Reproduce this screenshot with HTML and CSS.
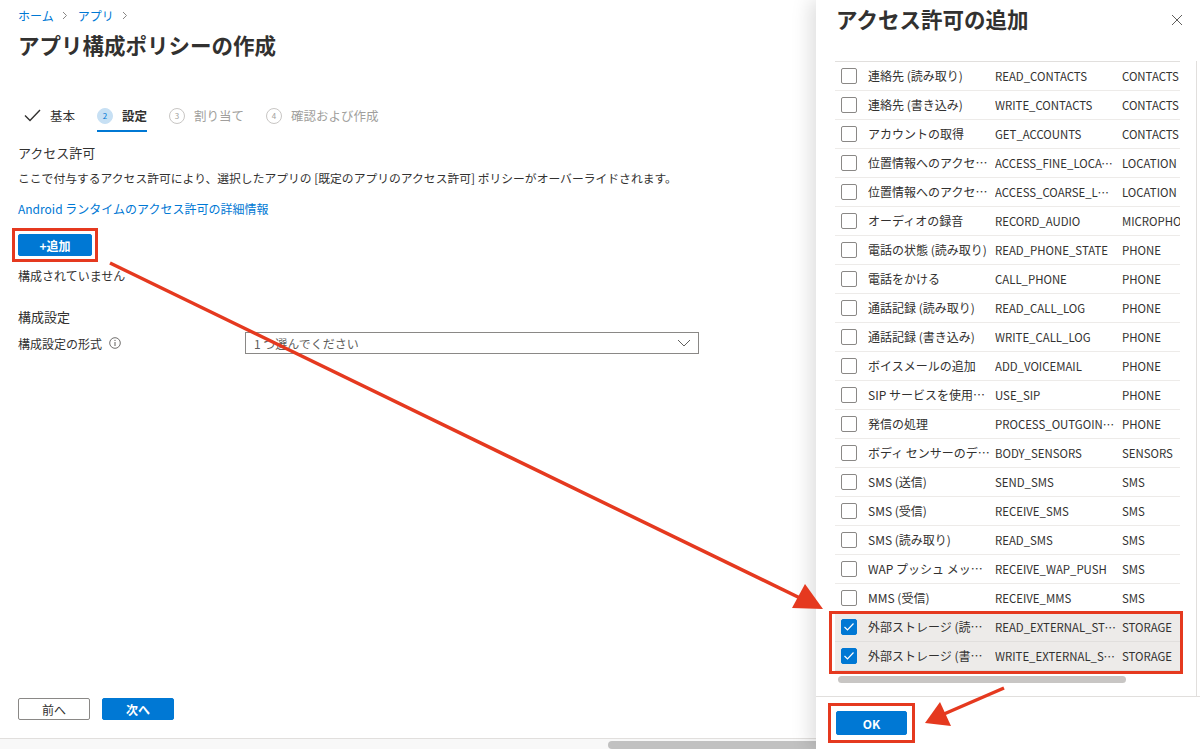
FILE: index.html
```html
<!DOCTYPE html>
<html lang="ja">
<head>
    <meta charset="UTF-8">
    <meta name="viewport" content="width=device-width, initial-scale=1.0">
    <title>アプリ構成ポリシーの作成</title>
    <link rel="stylesheet" href="styles.css">
</head>
<body>
<div class="screen">
    <div class="main">
        <div class="content">
            <nav class="crumbs">
                <a href="#">ホーム</a>
                <svg class="crumb-sep" width="6" height="9" viewBox="0 0 6 9"><path d="M1 1l3.5 3.5L1 8" fill="none" stroke="#8a8886" stroke-width="1"/></svg>
                <a href="#">アプリ</a>
                <svg class="crumb-sep" width="6" height="9" viewBox="0 0 6 9"><path d="M1 1l3.5 3.5L1 8" fill="none" stroke="#8a8886" stroke-width="1"/></svg>
            </nav>
            <h1 class="title">アプリ構成ポリシーの作成</h1>

            <div class="steps">
                <div class="step done">
                    <svg width="17" height="13" viewBox="0 0 17 13"><path d="M1 6.5l5 5L16 1" fill="none" stroke="#323130" stroke-width="1.4"/></svg>
                    <span>基本</span>
                </div>
                <div class="step active">
                    <span class="num">2</span>
                    <span>設定</span>
                </div>
                <div class="step">
                    <span class="num">3</span>
                    <span>割り当て</span>
                </div>
                <div class="step">
                    <span class="num">4</span>
                    <span>確認および作成</span>
                </div>
            </div>

            <h3 class="section-title">アクセス許可</h3>
            <p class="desc">ここで付与するアクセス許可により、選択したアプリの [既定のアプリのアクセス許可] ポリシーがオーバーライドされます。</p>
            <a class="link" href="#">Android ランタイムのアクセス許可の詳細情報</a>
            <div class="mark add-mark"><button class="btn-primary add-btn">+追加</button></div>
            <p class="empty">構成されていません</p>

            <h3 class="section-title config-title">構成設定</h3>
            <div class="field">
                <label>構成設定の形式
                    <svg class="info" width="12" height="12" viewBox="0 0 12 12"><circle cx="6" cy="6" r="5.3" fill="none" stroke="#605e5c" stroke-width="0.9"/><path d="M6 5v4" stroke="#605e5c" stroke-width="1"/><circle cx="6" cy="3.4" r="0.6" fill="#605e5c"/></svg>
                </label>
                <div class="select">
                    <span>1 つ選んでください</span>
                    <svg width="14" height="8" viewBox="0 0 14 8"><path d="M1 1l6 6 6-6" fill="none" stroke="#605e5c" stroke-width="1"/></svg>
                </div>
            </div>
        </div>

        <div class="footer">
            <button class="btn-default">前へ</button>
            <button class="btn-primary">次へ</button>
        </div>
        <div class="hscroll"><div class="hscroll-thumb"></div></div>
    </div>

    <aside class="panel">
        <div class="panel-head">
            <h2>アクセス許可の追加</h2>
            <svg class="close" width="12" height="12" viewBox="0 0 12 12"><path d="M1 1l10 10M11 1L1 11" stroke="#605e5c" stroke-width="1"/></svg>
        </div>
        <div class="panel-body">
            <div class="perm-list">
                <div class="perm-row"><span class="cb"></span><span class="c1">連絡先 (読み取り)</span><span class="c2">READ_CONTACTS</span><span class="c3">CONTACTS</span></div>
                <div class="perm-row"><span class="cb"></span><span class="c1">連絡先 (書き込み)</span><span class="c2">WRITE_CONTACTS</span><span class="c3">CONTACTS</span></div>
                <div class="perm-row"><span class="cb"></span><span class="c1">アカウントの取得</span><span class="c2">GET_ACCOUNTS</span><span class="c3">CONTACTS</span></div>
                <div class="perm-row"><span class="cb"></span><span class="c1">位置情報へのアクセス (詳細)</span><span class="c2">ACCESS_FINE_LOCATION</span><span class="c3">LOCATION</span></div>
                <div class="perm-row"><span class="cb"></span><span class="c1">位置情報へのアクセス (おおよそ)</span><span class="c2">ACCESS_COARSE_LOCATION</span><span class="c3">LOCATION</span></div>
                <div class="perm-row"><span class="cb"></span><span class="c1">オーディオの録音</span><span class="c2">RECORD_AUDIO</span><span class="c3">MICROPHONE</span></div>
                <div class="perm-row"><span class="cb"></span><span class="c1">電話の状態 (読み取り)</span><span class="c2">READ_PHONE_STATE</span><span class="c3">PHONE</span></div>
                <div class="perm-row"><span class="cb"></span><span class="c1">電話をかける</span><span class="c2">CALL_PHONE</span><span class="c3">PHONE</span></div>
                <div class="perm-row"><span class="cb"></span><span class="c1">通話記録 (読み取り)</span><span class="c2">READ_CALL_LOG</span><span class="c3">PHONE</span></div>
                <div class="perm-row"><span class="cb"></span><span class="c1">通話記録 (書き込み)</span><span class="c2">WRITE_CALL_LOG</span><span class="c3">PHONE</span></div>
                <div class="perm-row"><span class="cb"></span><span class="c1">ボイスメールの追加</span><span class="c2">ADD_VOICEMAIL</span><span class="c3">PHONE</span></div>
                <div class="perm-row"><span class="cb"></span><span class="c1">SIP サービスを使用する</span><span class="c2">USE_SIP</span><span class="c3">PHONE</span></div>
                <div class="perm-row"><span class="cb"></span><span class="c1">発信の処理</span><span class="c2">PROCESS_OUTGOING_CALLS</span><span class="c3">PHONE</span></div>
                <div class="perm-row"><span class="cb"></span><span class="c1">ボディ センサーのデータ</span><span class="c2">BODY_SENSORS</span><span class="c3">SENSORS</span></div>
                <div class="perm-row"><span class="cb"></span><span class="c1">SMS (送信)</span><span class="c2">SEND_SMS</span><span class="c3">SMS</span></div>
                <div class="perm-row"><span class="cb"></span><span class="c1">SMS (受信)</span><span class="c2">RECEIVE_SMS</span><span class="c3">SMS</span></div>
                <div class="perm-row"><span class="cb"></span><span class="c1">SMS (読み取り)</span><span class="c2">READ_SMS</span><span class="c3">SMS</span></div>
                <div class="perm-row"><span class="cb"></span><span class="c1">WAP プッシュ メッセージの受信</span><span class="c2">RECEIVE_WAP_PUSH</span><span class="c3">SMS</span></div>
                <div class="perm-row"><span class="cb"></span><span class="c1">MMS (受信)</span><span class="c2">RECEIVE_MMS</span><span class="c3">SMS</span></div>
                <div class="selected-group">
                    <div class="perm-row selected"><span class="cb checked"><svg width="12" height="10" viewBox="0 0 12 10"><path d="M1.5 5l3 3 6-6.5" fill="none" stroke="#fff" stroke-width="1.2"/></svg></span><span class="c1">外部ストレージ (読み取り)</span><span class="c2">READ_EXTERNAL_STORAGE</span><span class="c3">STORAGE</span></div>
                    <div class="perm-row selected"><span class="cb checked"><svg width="12" height="10" viewBox="0 0 12 10"><path d="M1.5 5l3 3 6-6.5" fill="none" stroke="#fff" stroke-width="1.2"/></svg></span><span class="c1">外部ストレージ (書き込み)</span><span class="c2">WRITE_EXTERNAL_STORAGE</span><span class="c3">STORAGE</span></div>
                </div>
            </div>
            <div class="list-scroll"><div class="list-thumb"></div></div>
        </div>
        <div class="panel-foot">
            <div class="mark ok-mark"><button class="btn-primary ok-btn">OK</button></div>
        </div>
    </aside>

    <!-- annotation arrows -->
    <svg class="arrows" width="1200" height="749" viewBox="0 0 1200 749">
        <line x1="110" y1="263" x2="800" y2="598" stroke="#e5391f" stroke-width="3.5"/>
        <polygon points="823,609 792,608 805,584" fill="#e5391f"/>
        <line x1="1004" y1="688" x2="944" y2="714" stroke="#e5391f" stroke-width="3.5"/>
        <polygon points="925,723 940,702 951,726" fill="#e5391f"/>
    </svg>
</div>
</body>
</html>
```

FILE: styles.css
```css
* {
    box-sizing: border-box;
}

body {
    margin: 0;
    font-family: "Noto Sans CJK JP", sans-serif;
    color: #323130;
    background-color: #fff;
    overflow: hidden;
}

.screen {
    position: relative;
    display: flex;
    width: 1200px;
    height: 749px;
    overflow: hidden;
}

/* main blade */

.main {
    width: 816px;
    height: 749px;
    display: flex;
    flex-direction: column;
    flex-shrink: 0;
}

.content {
    flex: 1;
    padding: 0 18px;
}

.crumbs {
    display: flex;
    align-items: center;
    gap: 8px;
    margin-top: 7px;
    height: 16px;
    font-size: 12px;
}

.crumbs a {
    color: #0078d4;
    text-decoration: none;
}

.crumb-sep {
    margin-right: 2px;
}

.title {
    margin: 8px 0 0;
    font-size: 21.5px;
    line-height: 28px;
    font-weight: 700;
    color: #323130;
}

.steps {
    display: flex;
    gap: 22px;
    margin-top: 42px;
    padding-left: 6px;
    font-size: 12.5px;
}

.step {
    display: flex;
    align-items: center;
    gap: 9px;
    height: 31px;
    color: #a19f9d;
    border-bottom: 2px solid transparent;
}

.step.done {
    color: #323130;
    gap: 9px;
}

.step.active {
    color: #323130;
    font-weight: 700;
    border-bottom-color: #0078d4;
}

.step .num {
    width: 16px;
    height: 16px;
    border-radius: 50%;
    border: 1px solid #c8c6c4;
    font-size: 8px;
    font-weight: 400;
    display: flex;
    align-items: center;
    justify-content: center;
    color: #a19f9d;
}

.step.active .num {
    background-color: #c7e0f4;
    border-color: #c7e0f4;
    color: #0078d4;
}

.section-title {
    margin: 12px 0 0;
    font-size: 13px;
    font-weight: 400;
    line-height: 18px;
}

.desc {
    margin: 7px 0 0;
    font-size: 11.8px;
    line-height: 18px;
}

.link {
    display: block;
    margin-top: 13px;
    font-size: 12px;
    line-height: 18px;
    color: #0078d4;
    text-decoration: none;
}

.btn-primary,
.btn-default {
    height: 22px;
    width: 72px;
    font-family: inherit;
    font-size: 12px;
    font-weight: 700;
    border-radius: 2px;
    cursor: pointer;
}

.btn-primary {
    background-color: #0078d4;
    border: 1px solid #0078d4;
    color: #fff;
}

.btn-default {
    background-color: #fff;
    border: 1px solid #8a8886;
    color: #323130;
    font-weight: 400;
}

/* red annotation boxes */
.mark {
    display: inline-flex;
    border: 3px solid #e5391f;
}

.add-mark {
    margin: 10px 0 0 -6px;
    padding: 3px;
}

.add-btn {
    width: 74px;
}

.empty {
    margin: 5px 0 0;
    font-size: 12px;
    line-height: 18px;
}

.config-title {
    margin-top: 23px;
}

.field {
    display: flex;
    align-items: center;
    margin-top: 6px;
    font-size: 12px;
}

.field label {
    width: 227px;
    display: flex;
    align-items: center;
    gap: 7px;
}

.select {
    width: 454px;
    height: 22px;
    border: 1px solid #8a8886;
    display: flex;
    align-items: center;
    justify-content: space-between;
    padding: 0 7px 0 8px;
    color: #605e5c;
}

.footer {
    display: flex;
    gap: 12px;
    padding: 18px 18px;
    border-bottom: 1px solid #e1dfdd;
}

.hscroll {
    height: 10px;
    background-color: #f8f8f8;
    padding-top: 2px;
}

.hscroll-thumb {
    margin-left: 608px;
    height: 8px;
    background-color: #c1c1c1;
    border-radius: 4px 0 0 4px;
}

/* side panel */

.panel {
    width: 384px;
    height: 749px;
    flex-shrink: 0;
    background-color: #fff;
    box-shadow: -6px 0 18px rgba(0, 0, 0, 0.13);
    display: flex;
    flex-direction: column;
    position: relative;
    z-index: 1;
}

.panel-head {
    height: 61px;
    display: flex;
    justify-content: space-between;
    padding: 5px 17px 0 20px;
}

.panel-head h2 {
    margin: 0;
    font-size: 21.5px;
    line-height: 28px;
    font-weight: 700;
}

.close {
    margin-top: 9px;
}

.panel-body {
    height: 639px;
    margin-right: 3px;
    border-right: 1px solid #e1dfdd;
    padding-left: 19px;
}

.perm-list {
    width: 345px;
    border-top: 1px solid #e1dfdd;
}

.perm-row {
    display: grid;
    grid-template-columns: 33px 127px 127px 58px;
    align-items: center;
    height: 29px;
    border-bottom: 1px solid #edebe9;
    font-size: 12px;
}

.perm-row span {
    white-space: nowrap;
    overflow: hidden;
}

.c1 {
    text-overflow: ellipsis;
    padding-right: 3px;
}

.c2 {
    text-overflow: ellipsis;
    padding-right: 6px;
    font-size: 11.4px;
}

.c3 {
    font-size: 11.4px;
}

.cb {
    margin-left: 6px;
    width: 16px;
    height: 16px;
    border: 1px solid #8a8886;
    border-radius: 2px;
}

.cb.checked {
    background-color: #0078d4;
    border-color: #0078d4;
    display: flex;
    align-items: center;
    justify-content: center;
}

.perm-row.selected {
    background-color: #edebe9;
    border-bottom-color: #e1dfdd;
}

.selected-group {
    position: relative;
}

.selected-group::after {
    content: "";
    position: absolute;
    top: -2px;
    left: -6px;
    right: -3px;
    bottom: -3px;
    border: 3px solid #e5391f;
}

.list-scroll {
    margin-top: 5px;
    padding-left: 3px;
}

.list-thumb {
    width: 288px;
    height: 7px;
    background-color: #c8c6c4;
    border-radius: 4px;
}

.panel-foot {
    flex: 1;
    border-top: 1px solid #e1dfdd;
    padding: 6px 12px;
}

.ok-mark {
    padding: 5px;
}

.ok-btn {
    width: 71px;
    height: 24px;
}

.arrows {
    position: absolute;
    top: 0;
    left: 0;
    z-index: 2;
    pointer-events: none;
}
```
